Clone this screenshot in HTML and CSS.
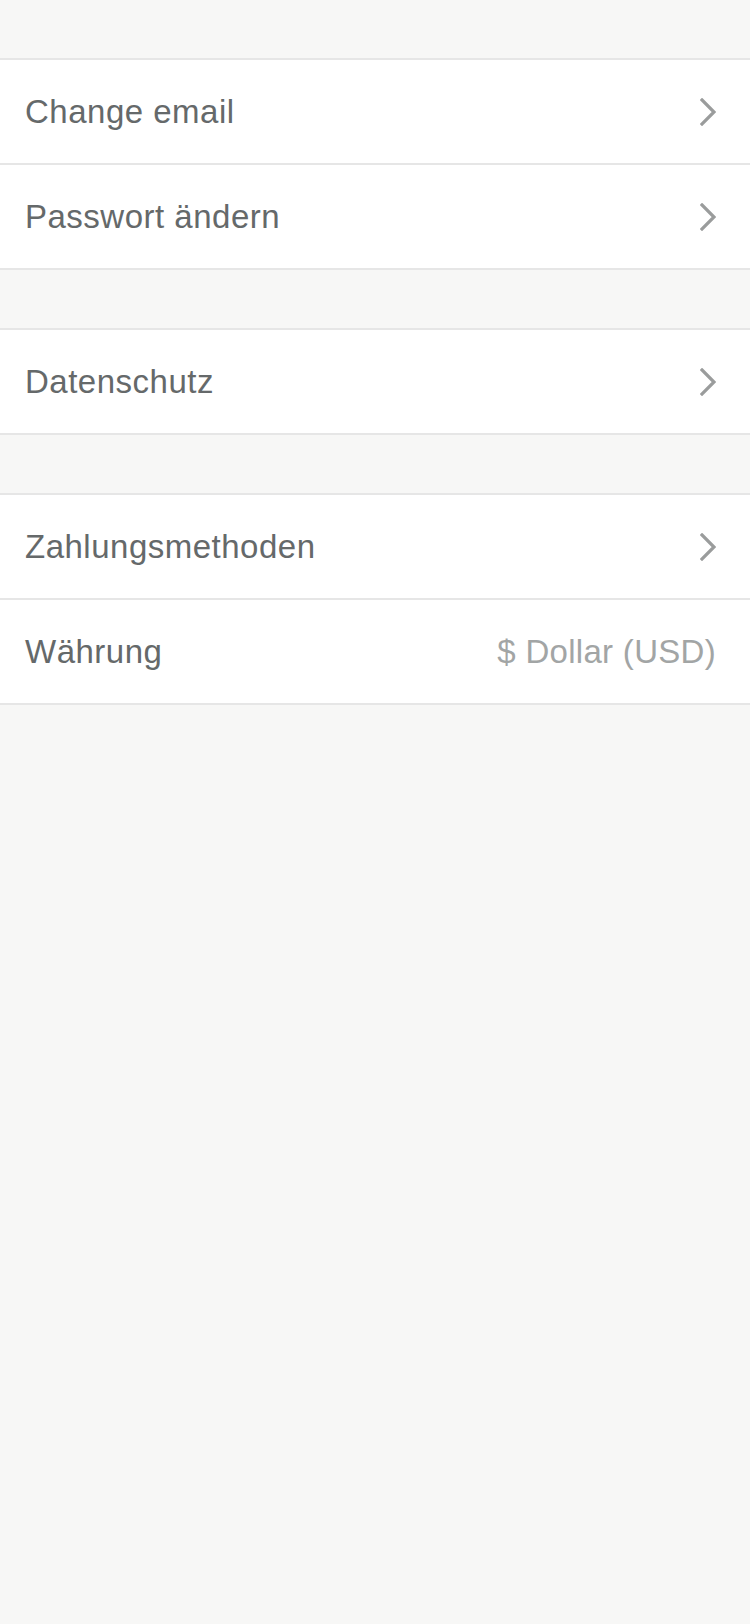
FILE: index.html
```html
<!DOCTYPE html>
<html lang="de">
<head>
<meta charset="utf-8">
<title>Einstellungen</title>
<link rel="stylesheet" href="styles.css">
</head>
<body>
<div class="screen">
  <div class="gap"></div>
  <div class="group">
    <div class="row">
      <span class="label">Change email</span>
      <svg class="chev" viewBox="0 0 16 28" width="16" height="28"><path d="M2 2 L14 14 L2 26" fill="none" stroke="#9a9c9c" stroke-width="3.2" stroke-linecap="square" stroke-linejoin="miter"/></svg>
    </div>
    <div class="row">
      <span class="label">Passwort ändern</span>
      <svg class="chev" viewBox="0 0 16 28" width="16" height="28"><path d="M2 2 L14 14 L2 26" fill="none" stroke="#9a9c9c" stroke-width="3.2" stroke-linecap="square" stroke-linejoin="miter"/></svg>
    </div>
  </div>
  <div class="gap"></div>
  <div class="group">
    <div class="row">
      <span class="label">Datenschutz</span>
      <svg class="chev" viewBox="0 0 16 28" width="16" height="28"><path d="M2 2 L14 14 L2 26" fill="none" stroke="#9a9c9c" stroke-width="3.2" stroke-linecap="square" stroke-linejoin="miter"/></svg>
    </div>
  </div>
  <div class="gap"></div>
  <div class="group">
    <div class="row">
      <span class="label">Zahlungsmethoden</span>
      <svg class="chev" viewBox="0 0 16 28" width="16" height="28"><path d="M2 2 L14 14 L2 26" fill="none" stroke="#9a9c9c" stroke-width="3.2" stroke-linecap="square" stroke-linejoin="miter"/></svg>
    </div>
    <div class="row">
      <span class="label">Währung</span>
      <span class="value">$ Dollar (USD)</span>
    </div>
  </div>
</div>
</body>
</html>
```

FILE: styles.css
```css
html, body {
  margin: 0;
  padding: 0;
  background: #f7f7f6;
}
body {
  font-family: "Liberation Sans", Arial, sans-serif;
}
.screen {
  width: 750px;
  min-height: 1624px;
  background: #f7f7f6;
}
.gap {
  height: 58px;
}
.group {
  background: #ffffff;
  border-top: 2px solid #e6e6e6;
}
.row {
  height: 103px;
  border-bottom: 2px solid #e6e6e6;
  display: flex;
  align-items: center;
  justify-content: space-between;
  padding: 0 34px 0 25px;
}
.label {
  font-size: 33px;
  color: #65696a;
  letter-spacing: 0.5px;
}
.value {
  font-size: 33px;
  color: #a2a5a5;
  letter-spacing: 0.3px;
}
.chev {
  display: block;
  margin-right: 0;
}
```
